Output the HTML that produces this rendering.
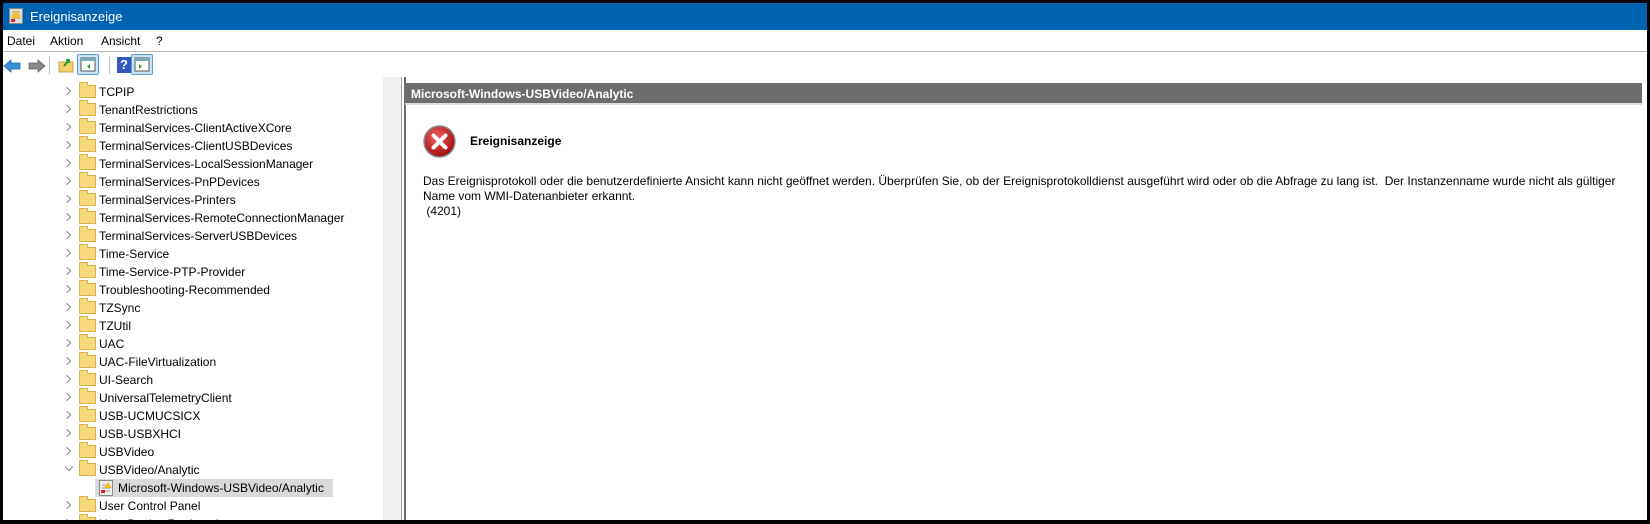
<!DOCTYPE html>
<html><head><meta charset="utf-8"><style>
*{margin:0;padding:0;box-sizing:border-box}
body{width:1650px;height:524px;background:#000;position:relative;overflow:hidden;font-family:"Liberation Sans",Arial,sans-serif;font-size:12px;color:#000}
.abs{position:absolute}
#title{left:3px;top:3px;width:1644px;height:27px;background:#0063b1;color:#fff;font-size:13px}
#menu{left:3px;top:30px;width:1644px;height:22px;background:#fff;border-bottom:1px solid #b8b8b8}
#menu span{position:absolute;top:4px}
#tool{left:3px;top:52px;width:1644px;height:25px;background:#fff}
#left{left:3px;top:77px;width:380px;height:443px;background:#fff;overflow:hidden}
#strip{left:383px;top:77px;width:18px;height:443px;background:#f0f0f0}
#split{left:401px;top:77px;width:5px;height:443px;background:#fff;border-left:1px solid #a0a0a0;border-right:2px solid #6d6d6d}
#right{left:406px;top:77px;width:1241px;height:443px;background:#fff}
#hdr{left:405px;top:83px;width:1237px;height:22px;background:#6d6d6d;color:#fff;font-weight:bold;font-size:12px;border-bottom:2px solid #dcdcdc}
.row{position:absolute;left:0;height:18px;width:380px}
.chev{position:absolute;left:61px;top:5px;width:6px;height:6px;border-right:1.2px solid #888;border-top:1.2px solid #888;transform:rotate(45deg)}
.fold{position:absolute;left:76px;top:2px;width:17px;height:13px;background:#f6d97a;border:1px solid #d9b24a}
.fold:before{content:"";position:absolute;left:-1px;top:-4px;width:7px;height:3px;background:#f6d97a;border:1px solid #d9b24a;border-bottom:none}
.txt{position:absolute;left:96px;top:2px;white-space:nowrap}
.btn{position:absolute;top:2px;width:22px;height:21px;background:#cce4f7;border:1px solid #5aa0d8;border-radius:2px}
</style></head><body>
<div id="title" class="abs">
 <svg class="abs" style="left:6px;top:5px" width="14" height="16"><rect x="0.5" y="0.5" width="13" height="15" fill="#ddd" stroke="#888"/><path d="M3 4h8M3 7h8M3 10h8" stroke="#999"/><polygon points="7,2 12,10 2,10" fill="#f3c020"/><rect x="2" y="11" width="4" height="3" fill="#d22"/></svg>
 <span class="abs" style="left:27px;top:6px">Ereignisanzeige</span>
</div>
<div id="menu" class="abs"><span style="left:4px">Datei</span><span style="left:47px">Aktion</span><span style="left:98px">Ansicht</span><span style="left:153px">?</span></div>
<div id="tool" class="abs">
 <svg class="abs" style="left:0;top:7px" width="45" height="14"><path d="M1 7l7-6v3h9v6H8v3z" fill="#3a8fd8" stroke="#2266aa" stroke-width=".8"/><path d="M42 7l-7-6v3h-9v6h9v3z" fill="#888" stroke="#666" stroke-width=".8"/></svg>
 <div class="abs" style="left:46px;top:4px;width:1px;height:18px;background:#bbb"></div>
 <svg class="abs" style="left:55px;top:5px" width="16" height="16"><rect x="1" y="5" width="14" height="10" fill="#f2cf6a" stroke="#c9a040"/><path d="M6 9l5-6M8 3h3v3" stroke="#2a9a2a" stroke-width="2" fill="none"/></svg>
 <div class="btn" style="left:74px"><svg width="20" height="19"><rect x="3" y="3" width="14" height="13" fill="#fff" stroke="#555"/><rect x="3" y="3" width="14" height="3" fill="#7ab"/><path d="M12 9l-3 2.5 3 2.5z" fill="#2a2"/></svg></div>
 <div class="abs" style="left:106px;top:4px;width:1px;height:18px;background:#bbb"></div>
 <div class="abs" style="left:114px;top:5px;width:14px;height:16px;background:#3457c0;color:#fff;font-weight:bold;font-size:13px;text-align:center;line-height:16px">?</div>
 <div class="btn" style="left:128px"><svg width="20" height="19"><rect x="3" y="3" width="14" height="13" fill="#fff" stroke="#555"/><rect x="3" y="3" width="14" height="3" fill="#7ab"/><path d="M7 9l3 2.5-3 2.5z" fill="#2a2"/></svg></div>
</div>
<div id="left" class="abs">
<div class="row" style="top:6px"><i class="chev"></i><i class="fold"></i><span class="txt">TCPIP</span></div>
<div class="row" style="top:24px"><i class="chev"></i><i class="fold"></i><span class="txt">TenantRestrictions</span></div>
<div class="row" style="top:42px"><i class="chev"></i><i class="fold"></i><span class="txt">TerminalServices-ClientActiveXCore</span></div>
<div class="row" style="top:60px"><i class="chev"></i><i class="fold"></i><span class="txt">TerminalServices-ClientUSBDevices</span></div>
<div class="row" style="top:78px"><i class="chev"></i><i class="fold"></i><span class="txt">TerminalServices-LocalSessionManager</span></div>
<div class="row" style="top:96px"><i class="chev"></i><i class="fold"></i><span class="txt">TerminalServices-PnPDevices</span></div>
<div class="row" style="top:114px"><i class="chev"></i><i class="fold"></i><span class="txt">TerminalServices-Printers</span></div>
<div class="row" style="top:132px"><i class="chev"></i><i class="fold"></i><span class="txt">TerminalServices-RemoteConnectionManager</span></div>
<div class="row" style="top:150px"><i class="chev"></i><i class="fold"></i><span class="txt">TerminalServices-ServerUSBDevices</span></div>
<div class="row" style="top:168px"><i class="chev"></i><i class="fold"></i><span class="txt">Time-Service</span></div>
<div class="row" style="top:186px"><i class="chev"></i><i class="fold"></i><span class="txt">Time-Service-PTP-Provider</span></div>
<div class="row" style="top:204px"><i class="chev"></i><i class="fold"></i><span class="txt">Troubleshooting-Recommended</span></div>
<div class="row" style="top:222px"><i class="chev"></i><i class="fold"></i><span class="txt">TZSync</span></div>
<div class="row" style="top:240px"><i class="chev"></i><i class="fold"></i><span class="txt">TZUtil</span></div>
<div class="row" style="top:258px"><i class="chev"></i><i class="fold"></i><span class="txt">UAC</span></div>
<div class="row" style="top:276px"><i class="chev"></i><i class="fold"></i><span class="txt">UAC-FileVirtualization</span></div>
<div class="row" style="top:294px"><i class="chev"></i><i class="fold"></i><span class="txt">UI-Search</span></div>
<div class="row" style="top:312px"><i class="chev"></i><i class="fold"></i><span class="txt">UniversalTelemetryClient</span></div>
<div class="row" style="top:330px"><i class="chev"></i><i class="fold"></i><span class="txt">USB-UCMUCSICX</span></div>
<div class="row" style="top:348px"><i class="chev"></i><i class="fold"></i><span class="txt">USB-USBXHCI</span></div>
<div class="row" style="top:366px"><i class="chev"></i><i class="fold"></i><span class="txt">USBVideo</span></div>
<div class="row" style="top:384px"><i class="chev" style="transform:rotate(135deg);left:63px;top:3px"></i><i class="fold"></i><span class="txt">USBVideo/Analytic</span></div>
<div class="row" style="top:402px"><div class="abs" style="left:92px;top:0;width:238px;height:18px;background:#d9d9d9"></div>
 <svg class="abs" style="left:96px;top:1px" width="14" height="16"><rect x="0.5" y="0.5" width="13" height="15" fill="#eee" stroke="#888"/><path d="M3 5h8M3 8h8M3 11h8" stroke="#999"/><polygon points="9,2 13,8 5,8" fill="#f3c020"/><rect x="2" y="10" width="4" height="3" fill="#d22"/></svg>
 <span class="txt" style="left:115px">Microsoft-Windows-USBVideo/Analytic</span></div>
<div class="row" style="top:420px"><i class="chev"></i><i class="fold"></i><span class="txt">User Control Panel</span></div>
<div class="row" style="top:438px"><i class="chev"></i><i class="fold"></i><span class="txt">User Device Registration</span></div>
</div>
<div id="strip" class="abs"></div>
<div id="split" class="abs"></div>
<div id="right" class="abs"></div>
<div id="hdr" class="abs"><span class="abs" style="left:6px;top:4px">Microsoft-Windows-USBVideo/Analytic</span></div>
<svg class="abs" style="left:423px;top:125px" width="33" height="33"><defs><radialGradient id="g" cx="40%" cy="35%" r="65%"><stop offset="0" stop-color="#f06060"/><stop offset="1" stop-color="#a01010"/></radialGradient></defs><circle cx="16.5" cy="16.5" r="15.5" fill="url(#g)" stroke="#8a8a8a" stroke-width="1.5"/><path d="M10.5 10.5l12 12M22.5 10.5l-12 12" stroke="#fff" stroke-width="4" stroke-linecap="round"/></svg>
<div class="abs" style="left:470px;top:134px;font-weight:bold;font-size:12px">Ereignisanzeige</div>
<div class="abs" style="left:423px;top:174px;width:1215px;font-size:12px;line-height:15px;white-space:nowrap">Das Ereignisprotokoll oder die benutzerdefinierte Ansicht kann nicht geöffnet werden. Überprüfen Sie, ob der Ereignisprotokolldienst ausgeführt wird oder ob die Abfrage zu lang ist.&nbsp; Der Instanzenname wurde nicht als gültiger<br>Name vom WMI-Datenanbieter erkannt.<br>&nbsp;(4201)</div>
</body></html>
